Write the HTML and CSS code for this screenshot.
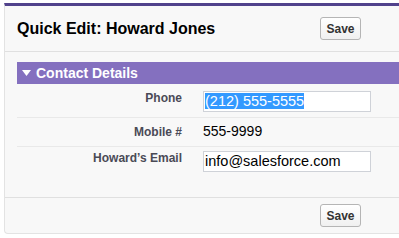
FILE: index.html
```html
<!DOCTYPE html>
<html>
<head>
<meta charset="utf-8">
<link rel="stylesheet" href="styles.css">
</head>
<body>
<div class="panel">
  <div class="header">
    <h1 class="title">Quick Edit: Howard Jones</h1>
    <button class="btn">Save</button>
  </div>
  <div class="section">
    <div class="section-head">
      <svg class="caret" width="9" height="6" viewBox="0 0 9 6"><path d="M0 0H9L4.5 6Z" fill="#fff"/></svg>
      <span>Contact Details</span>
    </div>
    <div class="row row-phone">
      <div class="label">Phone</div>
      <div class="value"><div class="field"><span class="sel">(212) 555-5555</span></div></div>
    </div>
    <div class="row row-mobile">
      <div class="label">Mobile #</div>
      <div class="value text">555-9999</div>
    </div>
    <div class="row row-email">
      <div class="label">Howard’s Email</div>
      <div class="value"><div class="field">info@salesforce.com</div></div>
    </div>
  </div>
  <div class="footer">
    <button class="btn">Save</button>
  </div>
</div>
</body>
</html>
```
FILE: styles.css
```css
html, body {
  margin: 0;
  padding: 0;
  background: #fff;
}
body {
  font-family: "Liberation Sans", Arial, sans-serif;
}
.panel {
  margin: 3px 0 0 4px;
  background: #f8f8f8;
  border-top: 3px solid #51428c;
  border-left: 1px solid #e3e3e3;
  border-bottom: 1px solid #e3e3e3;
  border-bottom-left-radius: 4px;
}
.header {
  display: flex;
  align-items: center;
  height: 45px;
  padding: 0 38px 0 12px;
  border-bottom: 1px solid #e0e0e0;
}
.title {
  margin: 0;
  flex: 1;
  font-size: 16px;
  font-weight: bold;
  color: #000;
}
.btn {
  font-family: "Liberation Sans", Arial, sans-serif;
  font-size: 12px;
  font-weight: bold;
  color: #333;
  width: 41px;
  height: 23px;
  padding: 0;
  border: 1px solid #b5b5b5;
  border-radius: 3px;
  background: linear-gradient(#ffffff, #f0f0f0);
}
.section {
  padding: 10px 0 0 12px;
  height: 135px;
}
.section-head {
  display: flex;
  align-items: center;
  gap: 5px;
  height: 22px;
  padding-left: 5px;
  background: #8470bf;
  color: #fff;
  font-size: 14px;
  font-weight: bold;
}
.caret {
  display: block;
}
.row {
  display: flex;
  align-items: flex-start;
  gap: 21px;
  border-bottom: 1px solid #e9e9e9;
}
.row-phone {
  padding: 7px 0 5px;
}
.row-mobile {
  padding: 3px 0 3px;
  align-items: baseline;
}
.row-email {
  padding: 4px 0 0;
  border-bottom: none;
}
.label {
  width: 165px;
  text-align: right;
  font-size: 12px;
  line-height: 14px;
  font-weight: bold;
  color: #4a4a56;
}
.row-mobile .label {
  line-height: 21px;
}
.text {
  font-size: 14px;
  line-height: 21px;
  color: #000;
}
.field {
  box-sizing: border-box;
  width: 168px;
  height: 21px;
  padding: 1px 0 0 1px;
  border: 1px solid #cfd2d8;
  background: #fff;
  font-size: 14.5px;
  line-height: 17px;
  color: #000;
  white-space: nowrap;
}
.sel {
  background: #3399ff;
  color: #fff;
}
.footer {
  display: flex;
  justify-content: flex-end;
  padding: 6px 38px 6px 0;
  border-top: 1px solid #e0e0e0;
}
```
